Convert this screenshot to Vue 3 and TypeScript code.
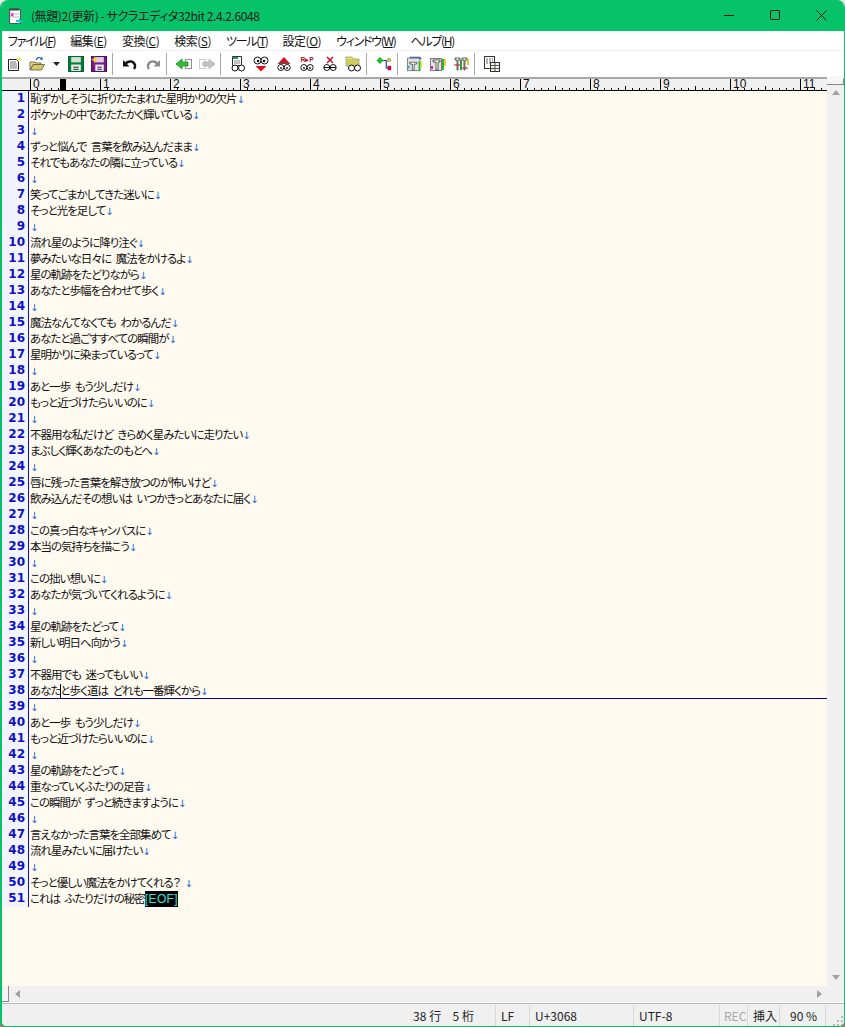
<script setup lang="ts">
const text = `恥ずかしそうに折りたたまれた星明かりの欠片
ポケットの中であたたかく輝いている

ずっと悩んで 言葉を飲み込んだまま
それでもあなたの隣に立っている

笑ってごまかしてきた迷いに
そっと光を足して

流れ星のように降り注ぐ
夢みたいな日々に 魔法をかけるよ
星の軌跡をたどりながら
あなたと歩幅を合わせて歩く

魔法なんてなくても わかるんだ
あなたと過ごすすべての瞬間が
星明かりに染まっているって

あと一歩 もう少しだけ
もっと近づけたらいいのに

不器用な私だけど きらめく星みたいに走りたい
まぶしく輝くあなたのもとへ

唇に残った言葉を解き放つのが怖いけど
飲み込んだその想いは いつかきっとあなたに届く

この真っ白なキャンバスに
本当の気持ちを描こう

この拙い想いに
あなたが気づいてくれるように

星の軌跡をたどって
新しい明日へ向かう

不器用でも 迷ってもいい
あなたと歩く道は どれも一番輝くから

あと一歩 もう少しだけ
もっと近づけたらいいのに

星の軌跡をたどって
重なっていくふたりの足音
この瞬間が ずっと続きますように

言えなかった言葉を全部集めて
流れ星みたいに届けたい

そっと優しい魔法をかけてくれる？ 
これは ふたりだけの秘密`
const lines: string[] = text.split('\n')
const menus: [string, string, boolean][] = [
  ['ファイル', 'F', true], ['編集', 'E', false], ['変換', 'C', false], ['検索', 'S', false],
  ['ツール', 'T', true], ['設定', 'O', false], ['ウィンドウ', 'W', true], ['ヘルプ', 'H', true],
]
const rulerCells: number[] = Array.from({ length: 12 }, (_, i) => i)
</script>

<template>
  <div class="win">
    <header class="title">
      <svg class="appicon" width="16" height="18" viewBox="0 0 16 18">
        <rect x="2.5" y="2.5" width="11" height="14" fill="#fff" stroke="#555" />
        <path d="M3 1v3M5 1v3M7 1v3M9 1v3M11 1v3" stroke="#333" />
        <path d="M4 7h8M4 10h8" stroke="#bbb" />
        <path d="M3 5l2 2 2-2-1 2.5 1 2.5-2-1.5-2 1.5 1-2.5z" fill="#e020c0" />
        <path d="M9 13h3v-2l3 3-3 3v-2H9z" fill="#20c8e0" />
      </svg>
      <span class="title-text">(無題)2(更新) - サクラエディタ32bit 2.4.2.6048</span>
      <div class="controls">
        <svg width="11" height="11" viewBox="0 0 11 11"><path d="M0 5.5h10" stroke="#111" /></svg>
        <svg width="11" height="11" viewBox="0 0 11 11"><rect x=".5" y=".5" width="9" height="9" rx="1" fill="none" stroke="#111" /></svg>
        <svg width="11" height="11" viewBox="0 0 11 11"><path d="M.5.5l10 10M10.5.5l-10 10" stroke="#111" /></svg>
      </div>
    </header>

    <nav class="menu">
      <span v-for="m in menus" :key="m[1]" :class="m[2] ? 'kana' : 'kanji'">{{ m[0] }}(<u>{{ m[1] }}</u>)</span>
    </nav>

    <div class="toolbar">
      <button class="tb"><svg viewBox="0 0 16 16">
        <path d="M2.5 3.5h8l2 2v9h-10z" fill="#fff" stroke="#222" />
        <path d="M4 6h6M4 8h7M4 10h7M4 12h7" stroke="#777" />
        <path d="M13 0l.8 2 2 .8-2 .8-.8 2-.8-2-2-.8 2-.8z" fill="#ffe838" />
      </svg></button>
      <button class="tb"><svg viewBox="0 0 16 16">
        <path d="M1 6h5l1 1h5v2H4l-3 5z" fill="#e8d878" stroke="#555" stroke-width=".8" />
        <path d="M1.5 14l2.500-5.500H15.500l-3 5.500z" fill="#d8c860" stroke="#555" stroke-width=".8" />
        <path d="M7 4c1-3 4-3 5-1.500" fill="none" stroke="#1060b0" stroke-width="1.200" />
        <path d="M11 4l3-.5-1-3z" fill="#1060b0" />
      </svg></button>
      <button class="tb drop"><svg viewBox="0 0 7 4" width="7" height="4"><path d="M0 0h7L3.500 4z" fill="#222" /></svg></button>
      <button class="tb"><svg viewBox="0 0 15 15">
        <rect x=".5" y=".5" width="14" height="14" fill="#0b7d36" stroke="#063" />
        <rect x="3" y="1" width="9" height="5" fill="#cfe4d4" />
        <rect x="3" y="8" width="9" height="6" fill="#e8f2ea" />
        <rect x="5" y="10" width="5" height="1" fill="#333" />
        <rect x="5" y="12" width="5" height="1" fill="#333" />
      </svg></button>
      <button class="tb"><svg viewBox="0 0 15 15">
        <rect x=".5" y=".5" width="14" height="14" fill="#7a1a8a" stroke="#501060" />
        <rect x="4" y="1" width="8" height="5" fill="#e0d0e8" />
        <rect x="4" y="8" width="8" height="6" fill="#eee6f0" />
        <rect x="6" y="10" width="4" height="1" fill="#333" />
        <rect x="6" y="12" width="4" height="1" fill="#333" />
        <path d="M3.500 0l.9 2.600 2.600.9-2.600.9-.9 2.600-.9-2.600L0 3.500l2.600-.9z" fill="#f0dc30" />
      </svg></button>
      <i class="sep"></i>
      <button class="tb"><svg viewBox="0 0 16 16">
        <path d="M3.500 9C4 5 11 3.500 13 9c.4 1.500-.2 3-1 4" fill="none" stroke="#111" stroke-width="2.400" />
        <path d="M1 4l6.500 6.500H1z" fill="#111" />
      </svg></button>
      <button class="tb"><svg viewBox="0 0 16 16">
        <path d="M12.500 9C12 5 5 3.500 3 9c-.4 1.500.2 3 1 4" fill="none" stroke="#8c8c8c" stroke-width="2.400" />
        <path d="M15 4l-6.500 6.500H15z" fill="#8c8c8c" />
      </svg></button>
      <i class="sep"></i>
      <button class="tb"><svg viewBox="0 0 16 16">
        <rect x="9.500" y="3.500" width="6" height="9" fill="#fff" stroke="#222" stroke-dasharray="1 1" />
        <path d="M0 8l6-5v3h6v4H6v3z" fill="#30c030" stroke="#0a7a20" stroke-width=".7" />
      </svg></button>
      <button class="tb"><svg viewBox="0 0 16 16">
        <rect x=".5" y="3.500" width="6" height="9" fill="#fff" stroke="#999" stroke-dasharray="1 1" />
        <path d="M16 8l-6-5v3H4v4h6v3z" fill="#c4c4c4" stroke="#aaa" stroke-width=".7" />
      </svg></button>
      <i class="sep"></i>
      <button class="tb"><svg viewBox="0 0 16 16">
        <path d="M2.500.5h9v9h-9z" fill="#fff" stroke="#333" />
        <rect x="3" y="1" width="5" height="2" fill="#20a040" />
        <path d="M4 5h6M4 7h6" stroke="#888" />
        <circle cx="5" cy="12" r="3" fill="#fff" stroke="#111" /><circle cx="11.500" cy="12" r="3" fill="#fff" stroke="#111" />
      </svg></button>
      <button class="tb"><svg viewBox="0 0 16 16">
        <circle cx="4.500" cy="4.500" r="3.500" fill="#fff" stroke="#111" /><circle cx="11.500" cy="4.500" r="3.500" fill="#fff" stroke="#111" />
        <circle cx="5" cy="5" r="1.300" fill="#111" /><circle cx="11" cy="5" r="1.300" fill="#111" />
        <path d="M2.500 10h11L8 15.500z" fill="#e01020" />
      </svg></button>
      <button class="tb"><svg viewBox="0 0 16 16">
        <path d="M8 1l5.500 6h-11z" fill="#d81020" />
        <path d="M2 7.500h12" stroke="#555" />
        <circle cx="4.800" cy="11.500" r="3" fill="#fff" stroke="#111" /><circle cx="11.200" cy="11.500" r="3" fill="#fff" stroke="#111" />
        <circle cx="5" cy="12" r=".9" fill="#111" /><circle cx="11" cy="12" r=".9" fill="#111" />
      </svg></button>
      <button class="tb"><svg viewBox="0 0 16 16">
        <text x="8" y="6" text-anchor="middle" class="rp">R▸P</text>
        <circle cx="4.800" cy="11.500" r="3" fill="#fff" stroke="#111" /><circle cx="11.200" cy="11.500" r="3" fill="#fff" stroke="#111" />
        <circle cx="5" cy="12" r=".9" fill="#111" /><circle cx="11" cy="12" r=".9" fill="#111" />
      </svg></button>
      <button class="tb"><svg viewBox="0 0 16 16">
        <path d="M5 1l6 6M11 1L5 7" stroke="#c01020" stroke-width="1.500" />
        <circle cx="4.800" cy="11.500" r="3" fill="#fff" stroke="#111" /><circle cx="11.200" cy="11.500" r="3" fill="#fff" stroke="#111" />
        <path d="M2 11.500h12" stroke="#111" />
      </svg></button>
      <button class="tb"><svg viewBox="0 0 16 16">
        <path d="M1 1h6l1 2h6v7H1z" fill="#e4e070" stroke="#777" stroke-width=".8" stroke-dasharray="1.500 .5" />
        <path d="M2 4h11M2 6h11M2 8h11" stroke="#bcb840" />
        <circle cx="6.500" cy="12" r="3" fill="#fff" stroke="#111" /><circle cx="12.500" cy="12" r="3" fill="#fff" stroke="#111" />
      </svg></button>
      <i class="sep"></i>
      <button class="tb"><svg viewBox="0 0 18 16">
        <path d="M5 4h6.500v8.500H14" fill="none" stroke="#1030c0" stroke-width="1.200" />
        <path d="M4.500 0l4 4-4 4-4-4z" fill="#18c030" />
        <rect x="13" y="10" width="4" height="5" fill="#c81030" />
        <circle cx="14.500" cy="3.500" r="2" fill="#e4d020" stroke="#555" stroke-width=".5" />
      </svg></button>
      <i class="sep"></i>
      <button class="tb"><svg viewBox="0 0 18 18">
        <rect x=".5" y="2.500" width="14" height="14" fill="#dfe6e2" stroke="#777" />
        <path d="M3 1.500h11l2 2" fill="none" stroke="#2040c0" stroke-width="1.200" />
        <path d="M3 7h8v2H8v7H6V9H3z" fill="#fff" stroke="#333" stroke-width=".8" />
        <rect x="13" y="6" width="2" height="11" fill="#30b040" />
        <rect x="15" y="6" width="2" height="7" fill="#e4d820" />
        <rect x="1" y="11" width="2" height="3" fill="#20c0c0" />
      </svg></button>
      <button class="tb"><svg viewBox="0 0 16 16">
        <rect x=".5" y="2.500" width="11" height="12" fill="#e4e6dc" stroke="#777" />
        <path d="M3 4h7v2H8v8H6V6H3z" fill="#fff" stroke="#333" stroke-width=".8" />
        <rect x="12" y="3" width="2" height="11" fill="#30b040" />
        <rect x="14" y="3" width="2" height="7" fill="#e4d820" />
        <rect x="1" y="10" width="2" height="3" fill="#d020c0" />
      </svg></button>
      <button class="tb"><svg viewBox="0 0 16 16">
        <path d="M2 2h5v2H5v10H4V4H2zM9 2h5v2h-2v10h-1V4H9z" fill="#fff" stroke="#333" stroke-width=".8" />
        <path d="M1 9h7M8 12h7" stroke="#c02020" stroke-width="1.200" />
        <rect x="7" y="4" width="2" height="10" fill="#30a030" />
        <rect x="14" y="3" width="2" height="6" fill="#d8d020" />
      </svg></button>
      <i class="sep"></i>
      <button class="tb"><svg viewBox="0 0 16 16">
        <rect x=".5" y=".5" width="10" height="12" fill="#fff" stroke="#333" />
        <path d="M2 3h7M2 5h7M2 7h7" stroke="#666" stroke-dasharray="2 1" />
        <rect x="6.500" y="6.500" width="9" height="9" fill="#f2f2e6" stroke="#333" />
        <path d="M11 7v8M7 9.500h8M7 12.500h8" stroke="#555" />
      </svg></button>
    </div>

    <div class="main">
      <div class="content">
        <div class="ruler">
          <span class="ruler-mark"></span>
          <div v-for="c in rulerCells" :key="c" class="ruler-cell"><span>{{ c }}</span></div>
        </div>
        <div class="editor">
          <div v-for="(l, i) in lines" :key="i" class="row" :class="{ current: i === 37 }">
            <span class="no">{{ i + 1 }}</span>
            <span class="txt">{{ l }}<span v-if="i < lines.length - 1" class="lf">↓</span><span v-else class="eof">[EOF]</span></span>
            <i v-if="i === 37" class="caret"></i>
          </div>
        </div>
      </div>
      <div class="vscroll">
        <div class="split-v"></div>
        <span class="arr up"></span>
        <span class="grow"></span>
        <span class="arr down"></span>
      </div>
    </div>

    <div class="hscroll">
      <div class="split-h"></div>
      <span class="arr left"></span>
      <span class="grow"></span>
      <span class="arr right"></span>
    </div>

    <footer class="status">
      <span class="grow"></span>
      <span class="cell pos">38 行&nbsp;&nbsp;&nbsp; 5 桁</span>
      <span class="cell c-lf">LF</span>
      <span class="cell c-code">U+3068</span>
      <span class="cell c-enc">UTF-8</span>
      <span class="cell c-rec">REC</span>
      <span class="cell c-ins">挿入</span>
      <span class="cell c-zoom">90 %</span>
      <span class="cell c-grip">
        <svg width="11" height="11" viewBox="0 0 11 11" fill="#b8b8b8">
          <rect x="8" y="0" width="2" height="2" /><rect x="4" y="4" width="2" height="2" /><rect x="8" y="4" width="2" height="2" />
          <rect x="0" y="8" width="2" height="2" /><rect x="4" y="8" width="2" height="2" /><rect x="8" y="8" width="2" height="2" />
        </svg>
      </span>
    </footer>
  </div>
</template>

<style>
html, body { margin: 0; background: linear-gradient(#e8e8e8 50%, #9a8468 50%); }
</style>

<style scoped>
.win {
  box-sizing: border-box;
  height: 1027px;
  width: 845px;
  display: flex;
  flex-direction: column;
  overflow: hidden;
  border-radius: 8px 8px 6px 6px;
  border: solid #06c268;
  border-width: 0 1px 1px 2px;
  background: #f0f0f0;
  font-family: "Noto Sans CJK JP", sans-serif;
  font-feature-settings: "palt";
  font-size: 12px;
  color: #111;
}
.title {
  height: 31px;
  flex: none;
  background: #06c268;
  display: flex;
  align-items: center;
  padding-left: 7px;
  margin-left: -2px;
  margin-right: -1px;
}
.appicon { margin-right: 8px; flex: none; }
.title-text { font-size: 12px; color: #1a1a1a; letter-spacing: -.4px; }
.controls {
  margin-left: auto;
  display: flex;
  gap: 35px;
  padding-right: 18px;
}
.menu {
  height: 19px;
  flex: none;
  background: #fff;
  border-bottom: 1px solid #f0f0f0;
  display: flex;
  align-items: center;
  gap: 15px;
  padding-left: 6px;
  font-size: 12px;
}
.kana { letter-spacing: -1.300px; }
.kanji { letter-spacing: -.5px; }
.toolbar {
  height: 26px;
  flex: none;
  box-sizing: border-box;
  background: #fff;
  display: flex;
  align-items: center;
  padding-left: 0;
}
.tb {
  width: 23px;
  height: 22px;
  padding: 0;
  border: 0;
  background: none;
  display: flex;
  align-items: center;
  justify-content: center;
  flex: none;
}
.tb svg { width: 16px; height: 16px; }
.tb.drop { width: 16px; }
.tb.drop svg { width: 7px; height: 4px; }
.sep {
  width: 8px;
  height: 22px;
  flex: none;
  box-sizing: border-box;
  padding-left: 2px;
  background: linear-gradient(#a8a8a8, #a8a8a8) 2px 0 / 1px 100% no-repeat;
}
.rp { font-family: "Liberation Sans", sans-serif; font-size: 6.500px; font-weight: 700; fill: #b01020; }

.main { flex: 1; display: flex; min-height: 0; }
.content { flex: 1; min-width: 0; display: flex; flex-direction: column; }

.ruler {
  position: relative;
  height: 14px;
  flex: none;
  box-sizing: border-box;
  border-top: 2px solid #a8a8a8;
  border-bottom: 1px solid #000;
  background: #f0f0f0;
  display: flex;
  padding-left: 28px;
  overflow: hidden;
}
.ruler-mark {
  position: absolute;
  left: 58px;
  top: 0;
  width: 6px;
  height: 11px;
  background: #000;
}
.ruler-cell {
  flex: none;
  width: 70px;
  height: 11px;
  box-sizing: border-box;
  border-left: 1px solid #000;
  padding-left: 2px;
  font-family: "Liberation Sans", sans-serif;
  font-size: 12px;
  line-height: 11px;
  background:
    linear-gradient(#000, #000) 34px bottom / 1px 4px no-repeat,
    repeating-linear-gradient(90deg, transparent 0 6px, #000 6px 7px) 0 bottom / 100% 2px no-repeat;
}
.editor {
  flex: 1;
  min-height: 0;
  background: #fffaf0;
  overflow: hidden;
}
.row {
  position: relative;
  height: 16px;
  display: flex;
  line-height: 15px;
  white-space: pre;
}
.no {
  flex: none;
  box-sizing: border-box;
  width: 27px;
  padding-right: 3px;
  text-align: right;
  background: #f2f4fd;
  border-right: 1px solid #1010c0;
  color: #1010c8;
  font-family: "DejaVu Sans", sans-serif;
  font-feature-settings: normal;
  font-weight: 700;
  font-size: 12px;
}
.txt {
  padding-left: 1px;
  flex: 1;
  color: #111;
  font-size: 11.500px;
  letter-spacing: -1px;
  word-spacing: 3px;
}
.row.current .txt { box-shadow: inset 0 -1px 0 0 #0000b0; height: 16px; }
.row.current { height: 16px; }
.lf {
  font-family: "DejaVu Sans", sans-serif;
  font-feature-settings: normal;
  color: #1668c8;
  font-size: 10px;
  letter-spacing: 0;
}
.eof {
  display: inline-block;
  background: #000;
  color: #30e0d8;
  height: 16px;
  line-height: 16px;
  vertical-align: top;
  font-family: "Liberation Sans", sans-serif;
  font-size: 12px;
  font-feature-settings: normal;
  letter-spacing: .4px;
}
.caret {
  position: absolute;
  left: 58px;
  top: 1px;
  width: 1px;
  height: 14px;
  background: #000;
}

.vscroll {
  flex: none;
  width: 17px;
  background: #f0f0f0;
  display: flex;
  flex-direction: column;
  align-items: center;
}
.split-v {
  box-sizing: border-box;
  width: 17px;
  height: 7px;
  margin-top: 1px;
  background: #f4f4f4;
  border-bottom: 1px solid #888;
  border-right: 1px solid #888;
  border-top: 1px solid #fff;
}
.grow { flex: 1; }
.arr { width: 0; height: 0; border-style: solid; border-color: transparent; flex: none; }
.up { border-width: 0 4px 5px; border-bottom-color: #a0a0a0; margin-top: 5px; }
.down { border-width: 5px 4px 0; border-top-color: #a0a0a0; margin-bottom: 6px; }
.hscroll {
  height: 16px;
  flex: none;
  display: flex;
  align-items: center;
  background: #f0f0f0;
}
.split-h {
  box-sizing: border-box;
  width: 7px;
  height: 16px;
  background: #f4f4f4;
  border-right: 1px solid #888;
  border-bottom: 1px solid #888;
}
.left { border-width: 4px 5px 4px 0; border-right-color: #a0a0a0; margin-left: 6px; }
.right { border-width: 4px 0 4px 5px; border-left-color: #a0a0a0; margin-right: 22px; }
.status {
  height: 24px;
  flex: none;
  box-sizing: border-box;
  background: #f0f0f0;
  border-top: 1px solid #fff;
  box-shadow: inset 0 1px 0 #b8b8b8;
  display: flex;
  align-items: center;
  padding-top: 2px;
  font-size: 12px;
  color: #222;
}
.cell {
  box-sizing: border-box;
  height: 22px;
  line-height: 22px;
  padding-left: 5px;
  border-left: 1px solid #d8d8d8;
  white-space: pre;
  flex: none;
}
.pos { border-left: 0; width: 87px; padding-left: 5px; letter-spacing: .1px; }
.c-lf { width: 34px; }
.c-code { width: 104px; }
.c-enc { width: 86px; }
.c-rec { width: 28px; color: #a8a8a8; padding-left: 4px; }
.c-ins { width: 32px; }
.c-zoom { width: 46px; padding-left: 10px; }
.c-grip { width: 19px; display: flex; align-items: flex-end; justify-content: flex-end; }
</style>
